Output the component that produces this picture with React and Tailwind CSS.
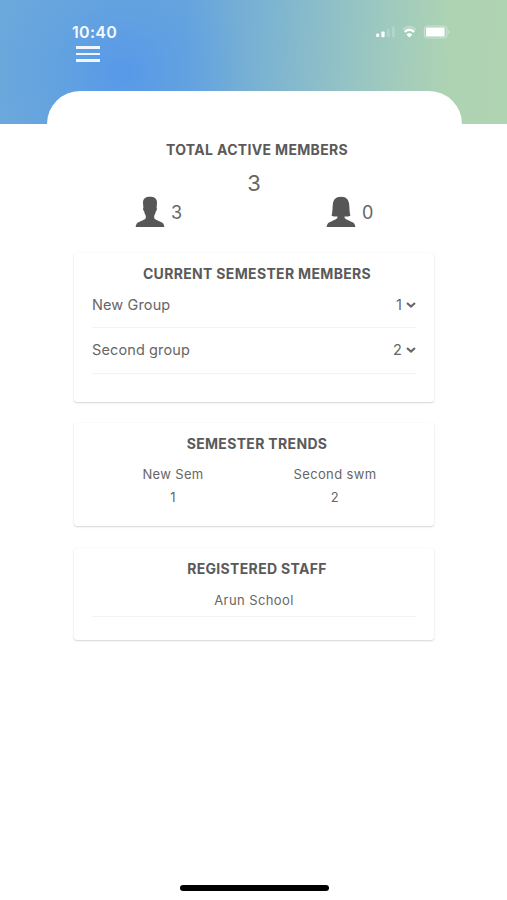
const groups = [
  { name: 'New Group', count: 1 },
  { name: 'Second group', count: 2 },
];

const trends = [
  { name: 'New Sem', count: 1 },
  { name: 'Second swm', count: 2 },
];

const staff = ['Arun School'];

function StatusIcons() {
  return (
    <svg className="absolute left-[375px] top-[24px]" width="76" height="16" viewBox="0 0 76 16" fill="#fff">
      {/* signal */}
      <rect x="1.2" y="9.4" width="3" height="3.6" rx="0.8" />
      <rect x="6.4" y="7.4" width="3.2" height="5.8" rx="0.8" />
      <rect x="11.8" y="4.8" width="2.8" height="8.4" rx="0.8" opacity="0.2" />
      <rect x="17" y="2.2" width="2.8" height="11" rx="0.8" opacity="0.2" />
      {/* wifi */}
      <path d="M28 5.4 Q34.4 -0.2 40.8 5.4" fill="none" stroke="#fff" strokeWidth="1.8" opacity="0.3" />
      <path d="M29.6 7.8 Q34.4 3.8 39.2 7.8" fill="none" stroke="#fff" strokeWidth="2.4" />
      <path d="M31.4 10.4 Q34.4 8 37.4 10.4 L34.4 13.4 Z" />
      {/* battery */}
      <rect x="49.4" y="2" width="22.4" height="12" rx="3.4" fill="none" stroke="#fff" strokeWidth="1.2" opacity="0.4" />
      <rect x="51" y="3.6" width="18.6" height="8.8" rx="1.2" />
      <path d="M73.2 6 Q75.4 8 73.2 10 Z" opacity="0.5" />
    </svg>
  );
}

function MaleIcon() {
  return (
    <svg width="30" height="32" viewBox="0 0 30 32" fill="#565656">
      <path d="M15 0.8 C19.5 0.8 22 2.6 22 6.6 C22 8.6 21.7 10.2 21.6 11.4 C22.3 12.4 21.9 14.4 20.9 15.3 C20.5 17.2 20 18.6 19.2 19.8 V22.2 C20.5 24 24.5 25 27 26.6 C28.500 27.6 29.200 29.200 29.300 31 H0.7 C0.8 29.200 1.5 27.6 3 26.6 C5.500 25 9.500 24 10.8 22.2 V19.8 C10 18.600 9.500 17.200 9.100 15.300 C8.100 14.400 7.700 12.400 8.400 11.400 C8.300 10.200 8 8.600 8 6.600 C8 2.600 10.500 0.8 15 0.8 Z" />
    </svg>
  );
}

function FemaleIcon() {
  return (
    <svg width="30" height="32" viewBox="0 0 30 32" fill="#565656">
      <path d="M15 0.8 C20.6 0.8 22.8 4 23.2 8.600 C23.600 12.800 23.400 16.400 24.400 19.800 C22.800 20.500 20.600 20.700 18.600 20.600 V22 C20 23.900 24.300 24.900 27 26.600 C28.500 27.600 29.200 29.200 29.300 31 H0.7 C0.8 29.200 1.500 27.600 3 26.600 C5.700 24.900 10 23.900 11.400 22 V20.600 C9.400 20.700 7.200 20.500 5.600 19.800 C6.600 16.400 6.400 12.800 6.800 8.600 C7.200 4 9.400 0.8 15 0.8 Z" />
    </svg>
  );
}

function Chevron() {
  return (
    <svg width="10" height="7" viewBox="0 0 10 7" fill="none" stroke="#666" strokeWidth="2.1">
      <path d="M1 1 5 4.6 9 1" />
    </svg>
  );
}

function Title({ children }) {
  return (
    <h2 className="pl-[6px] text-center text-[14px] leading-5 font-bold tracking-[0.33px] text-[#5a5a5a]">
      {children}
    </h2>
  );
}

function Card({ className, children }) {
  return (
    <section
      className={`rounded-[3px] bg-white px-[18px] shadow-[0_1px_2px_rgba(0,0,0,0.16),0_0_1px_rgba(0,0,0,0.08)] ${className}`}
    >
      {children}
    </section>
  );
}

export default function App() {
  return (
    <div className="relative h-[900px] w-[507px] overflow-hidden bg-white font-['Inter',sans-serif] text-[#666]">
      <header className="h-[124px] bg-[radial-gradient(ellipse_125px_120px_at_122px_72px,rgba(85,151,234,0.9)_0%,rgba(85,151,234,0.4)_45%,rgba(85,151,234,0)_100%),linear-gradient(93deg,#6ba8db_0%,#68a6dc_36%,#78b1d3_50%,#94c3c5_68%,#aed3b3_88%,#b0d4b1_100%)]">
        <div className="pt-[22px] pl-[72px] text-[16px] leading-5 font-semibold tracking-[0.3px] text-[#f4faff]">
          10:40
        </div>
        <StatusIcons />
        <button aria-label="Menu" className="mt-[4px] ml-[76px] flex w-[24px] flex-col gap-[4px]">
          <span className="h-[2.5px] w-full bg-[#eef7ff]" />
          <span className="h-[2.5px] w-full bg-[#eef7ff]" />
          <span className="h-[2.5px] w-full bg-[#eef7ff]" />
        </button>
      </header>

      <main className="relative -mt-[33px] ml-[47px] w-[415px] rounded-t-[33px] bg-white pt-[49px] pr-[28px] pl-[27px]">
        <Title>TOTAL ACTIVE MEMBERS</Title>
        <p className="mt-[9px] text-center text-[22px] leading-7">3</p>
        <div className="flex gap-[161px] pl-[61px] text-[18px] leading-8">
          <div className="flex w-[30px] gap-[6px]">
            <span className="-mt-px shrink-0"><MaleIcon /></span>
            <span>3</span>
          </div>
          <div className="flex gap-[6px]">
            <span className="-mt-px shrink-0"><FemaleIcon /></span>
            <span>0</span>
          </div>
        </div>

        <Card className="mt-[24px] h-[149px] pt-[11px]">
          <Title>CURRENT SEMESTER MEMBERS</Title>
          <ul className="text-[14.5px] tracking-[0.12px]">
            {groups.map((g, i) => (
              <li
                key={g.name}
                className={`flex items-start justify-between border-b border-[#f3f3f3] leading-5 ${i === 0 ? 'h-[44px] pt-[11px]' : 'h-[46px] pt-[12px]'}`}
              >
                <span>{g.name}</span>
                <span className="flex items-center gap-[4px]">
                  {g.count}
                  <Chevron />
                </span>
              </li>
            ))}
          </ul>
        </Card>

        <Card className="mt-[21px] h-[103px] pt-[11px]">
          <Title>SEMESTER TRENDS</Title>
          <div className="mt-[9px] grid grid-cols-2 text-center text-[13px] leading-[23px] tracking-[0.35px]">
            {trends.map((t) => (
              <div key={t.name}>
                <p>{t.name}</p>
                <p>{t.count}</p>
              </div>
            ))}
          </div>
        </Card>

        <Card className="mt-[22px] h-[92px] pt-[11px]">
          <Title>REGISTERED STAFF</Title>
          {staff.map((name) => (
            <p key={name} className="mt-[11px] border-b border-[#f3f3f3] pb-[6px] text-center text-[13px] leading-5 tracking-[0.4px]">
              {name}
            </p>
          ))}
        </Card>
      </main>

      {/* home indicator */}
      <div className="absolute bottom-[9px] left-[180px] h-[6px] w-[149px] rounded-full bg-black" />
    </div>
  );
}
